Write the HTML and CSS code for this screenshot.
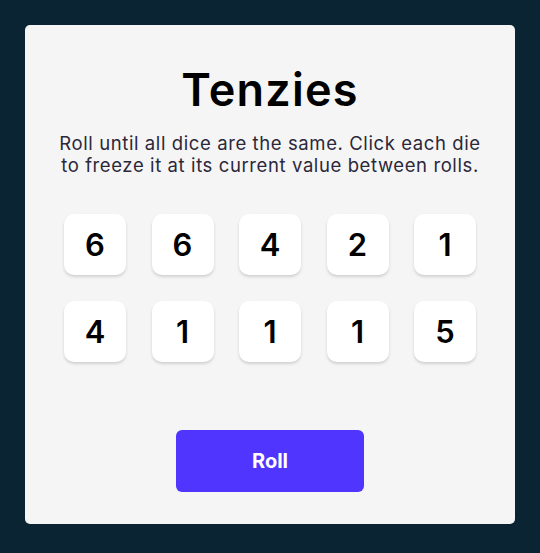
FILE: index.html
```html
<!DOCTYPE html>
<html>
<head>
<meta charset="utf-8">
<link rel="stylesheet" href="styles.css">
</head>
<body>
<main class="card">
  <h1 class="title">Tenzies</h1>
  <p class="instructions">Roll until all dice are the same. Click each die to freeze it at its current value between rolls.</p>
  <div class="dice">
    <button class="die">6</button>
    <button class="die">6</button>
    <button class="die">4</button>
    <button class="die">2</button>
    <button class="die">1</button>
    <button class="die">4</button>
    <button class="die">1</button>
    <button class="die">1</button>
    <button class="die">1</button>
    <button class="die">5</button>
  </div>
  <button class="roll">Roll</button>
</main>
</body>
</html>
```
FILE: styles.css
```css
html, body {
  margin: 0;
  padding: 0;
  background: #0B2434;
  height: 100%;
}
body {
  padding: 25px;
  box-sizing: border-box;
  font-family: Inter, "Noto Sans", sans-serif;
}
.card {
  background: #F5F5F5;
  border-radius: 5px;
  width: 490px;
  height: 499px;
  display: flex;
  flex-direction: column;
  align-items: center;
  box-sizing: border-box;
  padding-top: 38px;
}
.title {
  margin: 0;
  font-size: 45px;
  font-weight: 600;
  letter-spacing: 1.2px;
  line-height: 54px;
  color: #000;
}
.instructions {
  margin: 15px 0 0;
  font-size: 18.5px;
  font-weight: 400;
  letter-spacing: 0.6px;
  line-height: 22px;
  text-align: center;
  color: #2B283A;
  width: 436px;
}
.dice {
  display: grid;
  grid-template-columns: repeat(5, 62px);
  gap: 26px 25.5px;
  margin-top: 38px;
}
.die {
  width: 62px;
  height: 61px;
  border: none;
  border-radius: 10px;
  background: #fff;
  box-shadow: 0 2px 3px rgba(0,0,0,0.15);
  font-family: Inter, sans-serif;
  font-size: 31px;
  font-weight: 600;
  letter-spacing: 0;
  color: #000;
  padding: 0;
}
.roll {
  margin-top: 68px;
  width: 188px;
  height: 62px;
  border: none;
  border-radius: 6px;
  background: #5035FF;
  color: #fff;
  font-family: Inter, sans-serif;
  font-size: 20px;
  font-weight: 700;
}
```
